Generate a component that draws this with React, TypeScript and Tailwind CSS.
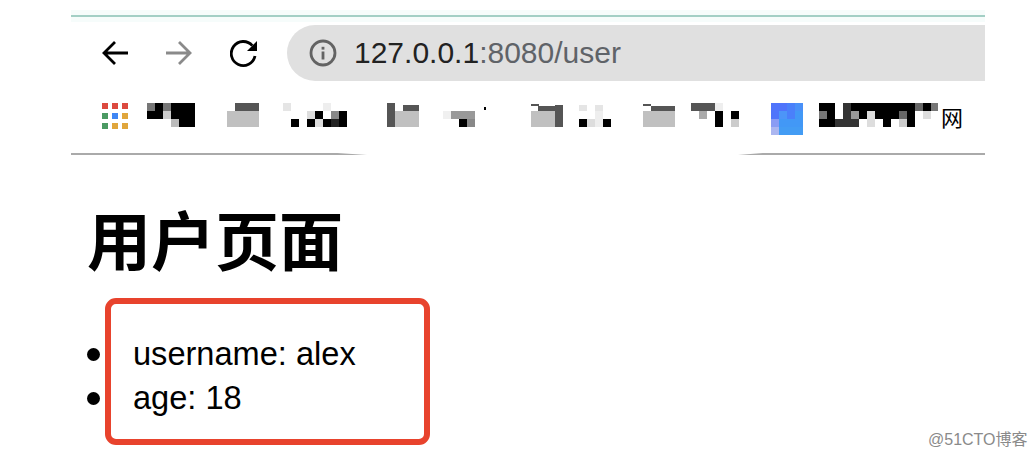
type Cell = [number, number, number, number, string];

function Blur({ w, h = 24, cells, className = '' }: { w: number; h?: number; cells: Cell[]; className?: string }) {
  return (
    <svg width={w} height={h} viewBox={`0 0 ${w} ${h}`} shapeRendering="crispEdges" className={`shrink-0 ${className}`}>
      {cells.map((c, i) => (
        <rect key={i} x={c[0]} y={c[1]} width={c[2]} height={c[3]} fill={c[4]} />
      ))}
    </svg>
  );
}

const K = '#000000';
const D = '#555555';
const L = '#c0c0c0';

const appsColors = ['#dc4a3f', '#dc4a3f', '#dc4a3f', '#4b9a63', '#3f86f4', '#e0a63c', '#4b9a63', '#e0a63c', '#e0a63c'];

const textBlur: Cell[] = [
  [0, 0, 16, 8, K], [24, 0, 8, 8, '#333333'], [32, 0, 64, 8, K], [96, 0, 8, 8, '#666666'], [104, 0, 8, 8, K], [112, 0, 7, 8, '#777777'],
  [0, 8, 8, 8, '#777777'], [8, 8, 8, 8, K], [24, 8, 8, 8, '#333333'], [32, 8, 8, 8, '#999999'], [40, 8, 8, 8, K], [48, 8, 8, 8, '#dddddd'],
  [56, 8, 24, 8, K], [80, 8, 8, 8, '#666666'], [88, 8, 8, 8, K], [104, 8, 8, 8, '#dddddd'],
  [0, 16, 16, 8, K], [16, 16, 24, 8, '#333333'], [48, 16, 8, 8, '#dddddd'], [64, 16, 8, 8, K], [80, 16, 8, 8, '#cccccc'], [88, 16, 8, 8, K],
];

const blueBlur: Cell[] = [
  [0, 0, 16, 8, '#4f74fb'], [16, 0, 8, 8, '#4a80fa'], [24, 0, 8, 8, '#4990f8'],
  [0, 8, 8, 8, '#4f74fb'], [8, 8, 8, 8, '#4c95f8'], [16, 8, 8, 8, '#4a80fa'], [24, 8, 8, 8, '#4298f6'],
  [0, 16, 8, 8, '#8a9cf4'], [8, 16, 24, 8, '#4298f6'],
  [0, 24, 8, 8, '#abb6f0'], [8, 24, 24, 8, '#439cf4'],
];

export default function App() {
  return (
    <div className="relative w-[1036px] h-[458px] overflow-hidden bg-white font-['Liberation_Sans',sans-serif] text-black">
      <div className="ml-[71px] w-[914px]">
        <div className="mt-[10px] py-[5px] bg-[#f6fcfb]">
          <div className="h-[2px] bg-[#a3cfc5]" />
        </div>

        <div className="mt-[3px] flex items-center h-[56px]">
          <svg width="28" height="26" viewBox="0 0 28 26" fill="none" stroke="#000" strokeWidth="2.8" className="ml-[30px] shrink-0">
            <path d="M27 13H3M14 2 3 13l11 11" />
          </svg>
          <svg width="28" height="26" viewBox="0 0 28 26" fill="none" stroke="#8a8a8a" strokeWidth="2.8" className="ml-[36px] shrink-0">
            <path d="M1 13h24M14 2l11 11-11 11" />
          </svg>
          <svg width="28" height="28" viewBox="0 0 28 28" fill="none" className="ml-[37px] shrink-0">
            <path d="M22.3 6.6A12 12 0 1 0 25 17" stroke="#000" strokeWidth="2.8" />
            <path d="M27 2v10H17z" fill="#000" />
          </svg>
          <div className="ml-[29px] flex-1 h-[56px] rounded-l-[28px] bg-[#e0e0e0] flex items-center pl-[22px]">
            <svg width="28" height="28" viewBox="0 0 28 28" fill="none" className="shrink-0">
              <circle cx="14" cy="14" r="12" stroke="#636363" strokeWidth="2.8" />
              <rect x="12.6" y="12.5" width="2.8" height="8" fill="#636363" />
              <rect x="12.6" y="7.8" width="2.8" height="2.8" fill="#636363" />
            </svg>
            <span className="ml-[17px] text-[30px] leading-none text-[#5f6368] whitespace-nowrap">
              <span className="text-[#222222]">127.0.0.1</span>:8080/user
            </span>
          </div>
        </div>

        <div className="mt-[22px] h-[32px] flex items-start">
          <div className="ml-[31px] w-[26px] grid grid-cols-3 gap-[4px] shrink-0">
            {appsColors.map((c, i) => (
              <span key={i} className="h-[6px] w-[6px]" style={{ backgroundColor: c }} />
            ))}
          </div>
          <Blur
            w={48}
            className="ml-[19px]"
            cells={[[0, 0, 8, 8, '#777777'], [8, 0, 8, 8, K], [16, 0, 8, 8, '#777777'], [24, 0, 24, 8, K], [0, 8, 16, 8, K], [16, 8, 8, 8, '#cccccc'], [24, 8, 24, 8, K], [24, 16, 8, 8, '#bbbbbb'], [32, 16, 16, 8, K]]}
          />
          <Blur w={32} className="ml-[32px]" cells={[[8, 0, 24, 8, D], [0, 8, 32, 16, L]]} />
          <Blur
            w={64}
            className="ml-[24px]"
            cells={[[0, 0, 8, 8, '#e5e5e5'], [40, 0, 8, 8, '#eeeeee'], [24, 8, 8, 8, '#dddddd'], [32, 8, 8, 8, K], [48, 8, 8, 8, '#888888'], [56, 8, 8, 8, K], [8, 16, 8, 8, K], [24, 16, 8, 8, K], [32, 16, 8, 8, '#dddddd'], [40, 16, 8, 8, K], [48, 16, 8, 8, '#222222'], [56, 16, 8, 8, K]]}
          />
          <Blur w={32} className="ml-[40px]" cells={[[0, 0, 8, 24, D], [16, 2, 16, 6, D], [8, 8, 24, 16, L]]} />
          <Blur
            w={44}
            className="ml-[24px]"
            cells={[[0, 8, 8, 8, '#f0f0f0'], [8, 8, 24, 8, '#999999'], [16, 16, 8, 8, K], [24, 16, 8, 8, '#888888'], [41, 4, 2, 3, K]]}
          />
          <Blur w={33} className="ml-[43px]" cells={[[1, 8, 24, 16, L], [1, 1, 8, 2, D], [8, 3, 17, 5, D], [25, 2, 8, 22, D]]} />
          <Blur
            w={32}
            className="ml-[16px]"
            cells={[[0, 2, 8, 6, '#e5e5e5'], [16, 2, 8, 6, '#e5e5e5'], [16, 8, 8, 8, '#eeeeee'], [0, 16, 8, 8, K], [8, 16, 8, 8, '#dddddd'], [16, 16, 8, 8, '#eeeeee'], [24, 16, 8, 8, K]]}
          />
          <Blur w={32} className="ml-[32px]" cells={[[0, 8, 32, 16, L], [0, 1, 8, 2, D], [8, 3, 24, 5, D]]} />
          <Blur
            w={48}
            className="ml-[16px]"
            cells={[[0, 0, 24, 8, D], [24, 0, 8, 8, '#eeeeee'], [8, 8, 8, 8, '#aaaaaa'], [24, 8, 8, 16, K], [40, 8, 8, 8, K], [40, 16, 8, 8, '#cccccc']]}
          />
          <Blur w={32} h={32} className="ml-[32px]" cells={blueBlur} />
          <Blur w={119} className="ml-[16px]" cells={textBlur} />
          <span className="ml-[3px] mt-[1px] text-[22px] leading-[24px] font-['Noto_Sans_CJK_SC',sans-serif]">网</span>
        </div>

        <div className="mt-[18px] flex justify-between">
          <div className="h-[2px] w-[296px] bg-[#aaaaaa] [clip-path:polygon(0_0,90%_0,100%_100%,0_100%)]" />
          <div className="h-[2px] w-[247px] bg-[#aaaaaa] [clip-path:polygon(10%_0,100%_0,100%_100%,0_100%)]" />
        </div>

        <h1 className="mt-[50px] ml-[16px] text-[64px] leading-[64px] font-bold font-['Noto_Sans_CJK_SC',sans-serif]">用户页面</h1>

        <ul className="mt-[63px] ml-[16px] text-[32.6px] leading-[44px]">
          {['username: alex', 'age: 18'].map((item) => (
            <li key={item} className="flex items-center">
              <span className="h-[13px] w-[13px] rounded-full bg-black" />
              <span className="ml-[33px]">{item}</span>
            </li>
          ))}
        </ul>
      </div>

      <div className="absolute left-[105px] top-[298px] h-[147px] w-[325px] rounded-[11px] border-[6px] border-[#e8432d]" />
      <span className="absolute left-[928px] top-[430px] text-[16px] leading-[20px] text-[#8a8a8a] font-['Liberation_Sans','Noto_Sans_CJK_SC',sans-serif]">@51CTO博客</span>
    </div>
  );
}
